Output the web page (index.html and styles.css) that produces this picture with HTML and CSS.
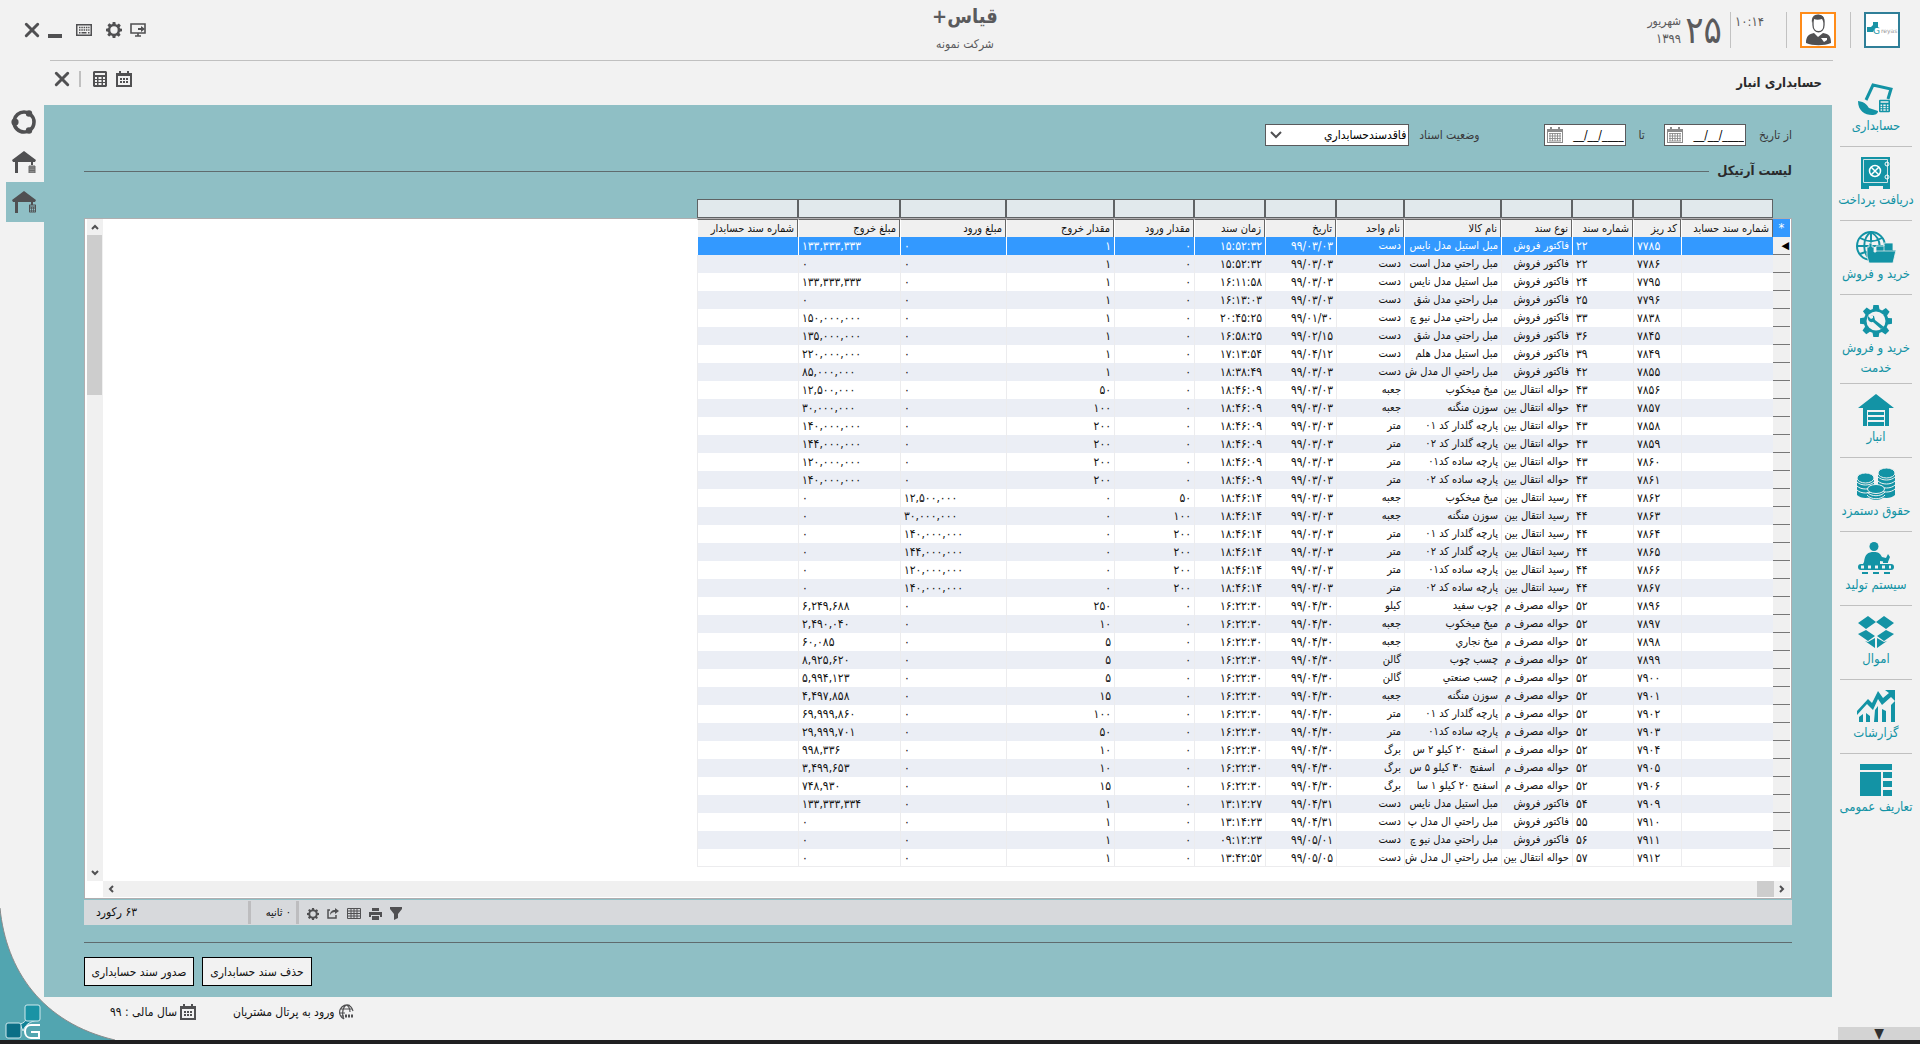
FILE: index.html
```html
<!DOCTYPE html>
<html lang="fa" dir="rtl">
<head>
<meta charset="utf-8">
<title>قیاس+ | حسابداری انبار</title>
<link rel="stylesheet" href="styles.css">
</head>
<body>
<svg class="defs" aria-hidden="true">
  <symbol id="i-close" viewBox="0 0 14 14"><path d="M2 2l10 10M12 2L2 12" fill="none" stroke="currentColor" stroke-width="2.6" stroke-linecap="round"/></symbol>
  <symbol id="i-gear" viewBox="0 0 24 24"><path fill="currentColor" fill-rule="evenodd" d="M10 0h4l.6 3.200 2 .9L19.400 2.300l2.800 2.800-1.900 2.700.8 1.900L24 10v4l-3.100.6-.9 2 1.900 2.700-2.800 2.800-2.700-1.900-1.900.8L14 24h-4l-.6-3.100-2-.9-2.700 1.900-2.800-2.800 1.900-2.700-.8-1.900L0 14v-4l3.200-.6.9-2L2.200 4.700 5 1.900l2.700 1.900 1.900-.8zM12 6.500a5.500 5.500 0 1 0 0 11 5.500 5.500 0 0 0 0-11z"/></symbol>
  <symbol id="i-cal" viewBox="0 0 16 16"><path fill="currentColor" fill-rule="evenodd" d="M0 2h3V0h2v2h6V0h2v2h3v14H0zM2 5v9h12V5z"/><path fill="currentColor" d="M4 7h2v2H4zM7 7h2v2H7zM10 7h2v2h-2zM4 10h2v2H4zM7 10h2v2H7zM10 10h2v2h-2z"/></symbol>
  <symbol id="i-cal-grid" viewBox="0 0 16 16"><path fill="currentColor" fill-rule="evenodd" d="M0 2h3V0h2v2h6V0h2v2h3v14H0zM1 5v10h14V5z"/><path d="M2 6.500h12M2 9h12M2 11.500h12M2 14h12M3 6v8M5.500 6v8M8 6v8M10.500 6v8M13 6v8" stroke="currentColor" stroke-width=".9"/></symbol>
  <symbol id="i-calc" viewBox="0 0 14 16"><path fill="currentColor" fill-rule="evenodd" d="M1 0h12l1 1v14l-1 1H1l-1-1V1zM2 2v2h10V2zM2 6v2h2V6zM5.500 6v2h3V6zM10 6v2h2V6zM2 9v2h2V9zM5.500 9v2h3V9zM10 9v2h2V9zM2 12v2h2v-2zM5.500 12v2h3v-2zM10 12v2h2v-2z"/></symbol>
  <symbol id="i-hut" viewBox="0 0 24 22"><path fill="currentColor" d="M12 0l12 9-1 2H1L0 9zM3 11h3v11H3zM19 11h2v3h-2z"/></symbol>
</svg>

<header class="topbar">
  <div class="window-tools">
    <button class="tool" aria-label="خروج"><svg width="16" height="16"><use href="#i-close"/></svg></button>
    <button class="tool" aria-label="کوچک کردن"><svg width="14" height="16"><path d="M0 12h14v4H0z" fill="currentColor"/></svg></button>
    <button class="tool keyboard" aria-label="صفحه کلید"><svg width="16" height="12" viewBox="0 0 16 12"><path fill="currentColor" fill-rule="evenodd" d="M0 0h16v12H0zM1.500 1.500v9h13v-9z"/><path d="M3 3.500h10.500M3 6h10.500" stroke="currentColor" stroke-width="1.500" stroke-dasharray="1.500 .8"/><path d="M3 8.700h1.500M5.500 8.700h5M12 8.700h1.500" stroke="currentColor" stroke-width="1.400"/></svg></button>
    <button class="tool" aria-label="تنظیمات"><svg width="16" height="16"><use href="#i-gear"/></svg></button>
    <button class="tool" aria-label="تغییر کاربر"><svg width="16" height="14" viewBox="0 0 16 14"><path d="M1 1h14v9H1zM8 10v3M5 13h6" fill="none" stroke="currentColor" stroke-width="1.600"/><path d="M8 5h3V3l4 3-4 3V7H8z" fill="currentColor"/></svg></button>
  </div>
  <div class="brand">
    <h1>قیاس+</h1>
    <p>شرکت نمونه</p>
  </div>
  <div class="account">
    <div class="logo-box"><svg width="32" height="32" viewBox="0 0 32 32"><path d="M7 8h5v6h-3l-2 4H1v-5h4l2-2z" fill="#1a93a5"/><text x="7" y="20" class="logo-g">G</text><text x="15" y="19" class="logo-name">reyas</text></svg></div>
    <i class="vline"></i>
    <button class="avatar" aria-label="کاربر"><svg width="28" height="32" viewBox="0 0 28 32"><path d="M9 8c0-9 11-9 11 0v3c0 9-11 9-11 0z" fill="#fff" stroke="#505052" stroke-width="1.300"/><path d="M8 9C7 2 11 0 15 1c5 0 6 4 5 8l-2-4c-3 1-6 1-8 0z" fill="#505052"/><path d="M2 29c0-7 3-9 8-10l4 4 5-4c6 1 8 3 8 10-7 3-18 3-25 0z" fill="#505052"/><path d="M17 24h6v2l-3 2z" fill="#fff"/></svg></button>
    <i class="vline"></i>
    <time class="clock">۱۰:۱۴</time>
    <i class="vline"></i>
    <span class="day">۲۵</span>
    <span class="month"><span>شهریور</span><span class="year">۱۳۹۹</span></span>
  </div>
</header>
<hr class="topline">

<div class="shell">
  <nav class="modules">
    <a href="#"><svg width="36" height="32" viewBox="0 0 36 32"><path d="M8 17L15 2l18 4-3 10" fill="none" stroke="currentColor" stroke-width="3"/><path d="M0 18c7 1 9 4 11 7l9 3c0 3-3 4-6 4C7 32 0 28 0 18z" fill="currentColor"/><svg x="21" y="16" width="11" height="14"><use href="#i-calc"/></svg></svg><span>حسابداری</span></a>
    <a href="#"><svg width="30" height="32" viewBox="0 0 30 32"><path d="M0 0h29v32h-7v-3H8v3H0z" fill="currentColor"/><path d="M2.500 2.500h24v23h-24z" fill="none" stroke="#cfe3e6"/><circle cx="14" cy="14" r="5.500" fill="none" stroke="#fff" stroke-width="1.500"/><path d="M10 10l8 8M18 10l-8 8" stroke="#fff" stroke-width="1.500"/><circle cx="26" cy="7" r="2" fill="none" stroke="#fff"/><circle cx="26" cy="20" r="2" fill="none" stroke="#fff"/></svg><span>دریافت پرداخت</span></a>
    <a href="#"><svg width="42" height="32" viewBox="0 0 42 32"><g fill="none" stroke="currentColor" stroke-width="2"><circle cx="16" cy="15" r="14"/><path d="M16 1v28M2 15h28M5 7c7 4 15 4 22 0M5 23c4-2 6-2 8-2M16 1c-9 6-9 22 0 28M16 1c8 5 10 12 8 20"/></g><path d="M12 25V16h2v-4h3v4h2v5h2v-6h8v-3h9v7h3l-3 13H14z" fill="currentColor" stroke="#f2f2f2" stroke-width=".8"/><path d="M20 20h20M29 14v6" stroke="#f2f2f2" stroke-width=".7"/></svg><span>خرید و فروش</span></a>
    <a href="#"><svg width="32" height="32" viewBox="0 0 32 32"><svg width="32" height="32"><use href="#i-gear"/></svg><circle cx="16" cy="16" r="9.500" fill="#f2f2f2"/><path d="M10 10l4 1 1 4 9 7-3 2-8-7c-4 1-6-3-5-6l3 3 2-1v-2z" fill="currentColor"/></svg><span>خرید و فروش خدمت</span></a>
    <a href="#"><svg width="36" height="32" viewBox="0 0 36 32"><path d="M18 0l18 14h-5v18h-4V16H9v16H5V14H0zM10 18h16v3H10zM10 23h16v3H10zM10 28h16v4H10z" fill="currentColor"/></svg><span>انبار</span></a>
    <a href="#"><svg width="38" height="32" viewBox="0 0 38 32"><g fill="currentColor"><path d="M0 10v17c4 4 13 4 17 0V10zM21 5v22c4 4 13 4 17 0V5zM11 21v8c4 4 12 4 16 0v-8z"/><g stroke="#f2f2f2"><ellipse cx="8.500" cy="10" rx="8.500" ry="5"/><ellipse cx="29.500" cy="5" rx="8.500" ry="5"/></g></g><g fill="none" stroke="#f2f2f2"><path d="M0 14c4 4 13 4 17 0M0 18c4 4 13 4 17 0M0 22c4 4 13 4 17 0M21 9c4 4 13 4 17 0M21 13c4 4 13 4 17 0M21 17c4 4 13 4 17 0M21 21c4 4 13 4 17 0"/><ellipse cx="19" cy="21" rx="8.500" ry="4.500" fill="#1393a5"/><path d="M10 24c4 5 14 5 18 0M10 27c4 5 14 5 18 0"/></g></svg><span>حقوق دستمزد</span></a>
    <a href="#"><svg width="36" height="32" viewBox="0 0 36 32"><circle cx="16" cy="4.500" r="4.500" fill="currentColor"/><path d="M6 20c1-8 4-10 10-10 4 0 6 1 8 5l4 1 2-4 2 3-2 5-8-1v3H5zM25 17h5v4h-5z" fill="currentColor"/><rect y="22" width="36" height="6" rx="3" fill="currentColor"/><path d="M3 25h30" stroke="#f2f2f2" stroke-width="3" stroke-dasharray="3 4"/><path d="M4 31h28" stroke="currentColor" stroke-width="2" stroke-dasharray="6 5"/></svg><span>سیستم تولید</span></a>
    <a href="#"><svg width="36" height="32" viewBox="0 0 36 32"><path d="M10 0l8 6-10 7-8-6zM26 0l10 7-8 6-10-7zM8 14l9 6-7 5-10-7zM28 14l8 4-10 7-7-5zM7 25l3 1 7-4v10zM29 25l-3 1-7-4v10z" fill="currentColor"/></svg><span>اموال</span></a>
    <a href="#"><svg width="38" height="32" viewBox="0 0 38 32"><path d="M0 21L11 9l4 4 6-12 5 7 6-5-4-3h10v11l-4-4-9 8-4-6-5 11-6-6L0 25zM2 27l4-3v8H2zM9 23l4 3v6H9zM18 20l3-4v16h-4zM25 19l4 2v11h-4zM34 15l4-4v21h-4z" fill="currentColor"/></svg><span>گزارشات</span></a>
    <a href="#"><svg width="32" height="32" viewBox="0 0 32 32"><path d="M0 0h32v6H0zM0 8h21v24H0zM23 8h9v6h-9zM23 17h9v6h-9zM23 26h9v6h-9z" fill="currentColor"/></svg><span>تعاریف عمومی</span></a>
    <button class="more" aria-label="بیشتر">▼</button>
  </nav>

  <div class="content">
    <div class="titlebar">
      <h2>حسابداری انبار</h2>
      <div class="title-tools">
        <button class="tool" aria-label="بستن"><svg width="16" height="16"><use href="#i-close"/></svg></button>
        <i class="sep"></i>
        <button class="tool" aria-label="ماشین حساب"><svg width="14" height="16"><use href="#i-calc"/></svg></button>
        <button class="tool" aria-label="تقویم"><svg width="16" height="16"><use href="#i-cal"/></svg></button>
      </div>
    </div>

    <main class="panel">
      <form class="filters">
        <label for="from">از تاریخ</label>
        <span class="date-box"><input id="from" value="__/__/____" dir="ltr"><svg class="cal" width="16" height="16"><use href="#i-cal-grid"/></svg></span>
        <label for="to">تا</label>
        <span class="date-box"><input id="to" value="__/__/____" dir="ltr"><svg class="cal" width="16" height="16"><use href="#i-cal-grid"/></svg></span>
        <label for="state" class="state-label">وضعیت اسناد</label>
        <span class="select-box"><select id="state"><option>فاقدسندحسابداري</option></select><svg width="12" height="8" viewBox="0 0 12 8"><path d="M1 1l5 5 5-5" fill="none" stroke="#505052" stroke-width="2"/></svg></span>
      </form>

      <div class="legend"><h3>لیست آرتیکل</h3><hr></div>

      <div class="column-filters" id="columnFilters"></div>
      <section class="grid">
        <div class="grid-body">
          <table>
            <colgroup id="cols"></colgroup>
            <thead><tr id="headRow"></tr></thead>
            <tbody id="rows"></tbody>
          </table>
          <div class="vscroll">
            <svg width="16" height="16" viewBox="0 0 16 16"><path d="M5 10l3-3 3 3" /></svg>
            <i class="vthumb"></i>
            <svg class="down" width="16" height="16" viewBox="0 0 16 16"><path d="M5 6l3 3 3-3"/></svg>
          </div>
        </div>
        <div class="hscroll">
          <svg width="16" height="16" viewBox="0 0 16 16"><path d="M6 5l3 3-3 3"/></svg>
          <i class="hthumb"></i>
          <svg class="end" width="16" height="16" viewBox="0 0 16 16"><path d="M10 5L7 8l3 3"/></svg>
        </div>
      </section>

      <div class="status">
        <div class="status-tools">
          <button class="tool" aria-label="فیلتر"><svg width="12" height="13" viewBox="0 0 12 13"><path d="M0 0h12v2L8 7v4l-4 2V7L0 2z" fill="currentColor"/></svg></button>
          <button class="tool" aria-label="چاپ"><svg width="13" height="12" viewBox="0 0 13 12"><path d="M3 0h7v3H3zM0 4h13v5h-2V7H2v2H0zM3 8h7v4H3z" fill="currentColor"/></svg></button>
          <button class="tool" aria-label="ستون ها"><svg width="14" height="11" viewBox="0 0 14 11"><path d="M.5.5h13v10H.5zM0 3h14M0 5.500h14M0 8h14M4 0v11M7 0v11M10 0v11" fill="none" stroke="currentColor"/></svg></button>
          <button class="tool" aria-label="ارسال"><svg width="12" height="11" viewBox="0 0 12 11"><path d="M3 2H1v8h8V7" fill="none" stroke="currentColor" stroke-width="1.500"/><path d="M3 7c0-3 2-5 5-5V0l4 3-4 3V4C6 4 4 5 3 7z" fill="currentColor"/></svg></button>
          <button class="tool" aria-label="تنظیمات جدول"><svg width="12" height="12"><use href="#i-gear"/></svg></button>
        </div>
        <span class="elapsed">۰ ثانیه</span>
        <span class="count">۶۳ رکورد</span>
      </div>

      <hr class="panel-line">
      <div class="actions">
        <button>حذف سند حسابداری</button>
        <button>صدور سند حسابداری</button>
      </div>
    </main>

    <footer class="footer">
      <a href="#"><svg width="16" height="16" viewBox="0 0 16 16"><path d="M12 1.500A7 7 0 1 0 6 15M15 7c-1-4-3-6-7-6C4 4 4 12 6 15M8 1c3 1 4 4 4 7M2 5h12M1 9h6M3 12h3" fill="none" stroke="currentColor" stroke-width="1.200"/><path d="M7 12h9" stroke="currentColor" stroke-width="3" stroke-dasharray="2 1"/></svg>ورود به پرتال مشتریان</a>
      <span><svg width="16" height="16"><use href="#i-cal"/></svg>سال مالی : ۹۹</span>
    </footer>
  </div>

  <nav class="rail">
    <a href="#" aria-label="چرخه"><svg width="26" height="26" viewBox="0 0 26 26"><circle cx="13" cy="13" r="10" fill="none" stroke="currentColor" stroke-width="3.600" stroke-dasharray="19 2" stroke-dashoffset="9"/><circle cx="4" cy="13" r="3.600" fill="currentColor"/><circle cx="18" cy="4.500" r="3.200" fill="currentColor"/><circle cx="18" cy="21.500" r="3.200" fill="currentColor"/></svg></a>
    <a href="#" aria-label="انبار"><svg width="24" height="22"><use href="#i-hut"/><path d="M17 15h6v7h-6zM17 17h6M17 19.500h6" fill="#8b8b8b" stroke="#6b6b6b"/></svg></a>
    <a href="#" class="active" aria-label="حسابداری انبار"><svg width="24" height="22"><use href="#i-hut"/><svg x="17" y="13" width="7" height="9"><use href="#i-calc"/></svg></svg></a>
  </nav>
</div>
<svg class="corner" width="115" height="132" viewBox="0 0 115 132"><path d="M0 0C6 62 42 115 115 132H0z" fill="#52a5b0"/><path d="M0 0C6 62 42 115 115 132" fill="none" stroke="#8b8b8b"/><path d="M20 116c4-1 6-3 7-7l11 3c-4 1-12 2-15 11z" fill="#0f8196" stroke="#cfe9ed"/><g stroke="#cfe9ed"><rect x="25" y="97" width="15" height="16" rx="2" fill="#1a93a5"/><rect x="6" y="115" width="15" height="15" rx="2" fill="#0b6f86"/></g><path d="M40 117h-9c-8 0-8 13 0 13h8v-6h-8" fill="none" stroke="#fff" stroke-width="2"/></svg>
<div class="taskbar"></div>
<script src="app.js"></script>
</body>
</html>
```
FILE: styles.css
```css
* { box-sizing: border-box; }
body {
  margin: 0;
  min-height: 100vh;
  display: flex;
  flex-direction: column;
  position: relative;
  background: #f2f2f2;
  color: #3a3a3c;
  font: 12px/16px "DejaVu Sans Condensed", "DejaVu Sans", sans-serif;
}
button, input, select { font: inherit; color: inherit; }
h1, h2, h3, p, hr { margin: 0; }
a { color: inherit; text-decoration: none; }
.defs { position: absolute; width: 0; height: 0; }
svg { display: block; flex: none; }
.tool {
  display: flex;
  padding: 0;
  border: 0;
  background: none;
  color: #505052;
}

/* Top bar */
.topbar {
  height: 60px;
  display: grid;
  grid-template-columns: 1fr auto 1fr;
  align-items: start;
  padding: 0 20px 0 24px;
}
.window-tools {
  grid-column: 3;
  grid-row: 1;
  direction: ltr;
  display: flex;
  align-items: center;
  gap: 8px;
  padding-top: 22px;
}
.keyboard { margin: 0 6px 0 6px; }
.brand {
  grid-column: 2;
  padding: 3px 0 0 6px;
  text-align: center;
  color: #5a5a5c;
}
.brand h1 { font-size: 20px; line-height: 26px; }
.brand p { line-height: 30px; }
.account {
  grid-column: 1;
  grid-row: 1;
  display: flex;
  padding-top: 12px;
  color: #5a5a5c;
}
.logo-box, .avatar {
  width: 36px;
  height: 36px;
  padding: 0;
  display: flex;
  align-items: center;
  justify-content: center;
  background: #fff;
  border: 2px solid #2f7f98;
}
.avatar { border-color: #ff8c1a; }
.logo-g { font: 9px "DejaVu Sans", sans-serif; fill: #1a93a5; direction: ltr; }
.logo-name { font: 6px "DejaVu Sans", sans-serif; fill: #9a9a9a; direction: ltr; }
.vline { width: 1px; height: 36px; margin: 0 13px 0 14px; background: #c2c2c2; }
.clock { margin-right: 8px; font-size: 13px; line-height: 20px; }
.clock + .vline { margin: 0 4px; }
.day { font-size: 38px; line-height: 36px; margin: 0 4px; }
.month { display: flex; flex-direction: column; line-height: 18px; }
.year { font-size: 13px; }
.topline { border: 0; height: 1px; background: #c0c0c0; margin: 0 87px 0 50px; }

/* Page frame */
.shell { flex: 1; display: flex; }
.modules {
  width: 88px;
  display: flex;
  flex-direction: column;
  padding: 12px 8px 0 0;
}
.modules a {
  width: 72px;
  min-height: 74px;
  display: flex;
  flex-direction: column;
  align-items: center;
  gap: 1px;
  padding: 10px 0 5px;
  border-bottom: 1px solid #c0c0c0;
  color: #1393a5;
  font-size: 13px;
  line-height: 20px;
  text-align: center;
}
.modules span { margin: 0 -6px; }
.modules a:last-of-type { border: 0; }
.more {
  margin: auto -8px 0 6px;
  height: 13px;
  padding: 0;
  border: 0;
  background: #d3d3d3;
  color: #303030;
  font-size: 14px;
  line-height: 13px;
}
.content { flex: 1; min-width: 0; display: flex; flex-direction: column; }
.titlebar {
  height: 44px;
  display: flex;
  justify-content: space-between;
  align-items: center;
  padding: 0 10px 0 10px;
}
.titlebar h2, .legend h3 { font-size: 13px; font-weight: bold; color: #2a2a2c; }
.titlebar h2 { line-height: 20px; }
.title-tools { direction: ltr; display: flex; gap: 9px; align-items: center; padding-bottom: 8px; }
.sep { width: 2px; height: 16px; background: #c0c0c0; margin-right: 3px; }

/* Left rail */
.rail { width: 44px; display: flex; flex-direction: column; padding: 41px 0 0 0; color: #505052; }
.rail a { height: 40px; display: flex; align-items: center; justify-content: center; margin-left: 6px; padding-right: 2px; }
.rail .active { background: #8fbfc5; }

/* Panel */
.panel { flex: 1; padding: 19px 40px 0 40px; background: #8fbfc5; }
.filters { display: flex; align-items: center; height: 22px; }
.date-box, .select-box {
  display: flex;
  align-items: center;
  height: 22px;
  border: 1px solid #5a5a5c;
  background: #fff;
}
.date-box { width: 82px; margin: 0 13px 0 19px; padding-left: 2px; }
.date-box input {
  flex: 1;
  min-width: 0;
  padding: 0 1px;
  border: 0;
  background: none;
  color: #000;
  font-size: 12px;
  text-align: right;
}
.cal { color: #8b8b8b; }
.state-label { margin-right: 45px; }
.select-box { width: 144px; margin-right: 10px; padding-left: 4px; }
.select-box select {
  flex: 1;
  min-width: 0;
  appearance: none;
  border: 0;
  padding: 0 2px;
  background: none;
  color: #000;
}
.legend { display: flex; gap: 8px; align-items: center; margin-top: 12px; }
.legend h3 { line-height: 26px; }
.legend hr, .panel-line { border: 0; height: 1px; background: #5f6b6e; }
.legend hr { flex: 1; }

/* Grid */
.column-filters { display: flex; width: 1076px; height: 19px; margin: 15px 19px 0 0; }
.column-filters input {
  min-width: 0;
  height: 19px;
  padding: 0 2px;
  border: 1px solid #5f6365;
  border-radius: 0;
  background: #e1e9ec;
}
.grid { background: #fff; border: 1px solid #b0aeb0; padding: 0 1px 1px 2px; }
.grid-body { display: flex; justify-content: space-between; }
table { width: 1093px; height: 648px; margin-bottom: 14px; table-layout: fixed; border-collapse: separate; border-spacing: 0; font-size: 11px; line-height: 16px; }
th, td {
  height: 18px;
  padding: 0 3px;
  overflow: hidden;
  white-space: pre;
  font-weight: normal;
  color: #111;
}
th {
  text-align: right;
  background: #f0f0f0;
  border-top: 1px solid #666;
  border-right: 1px solid #666;
  border-left: 1px solid #fff;
}
td { border-left: 1px solid #ececee; }
.num, .digits { font-size: 12px; }
.num { text-align: left; direction: ltr; }
tbody tr:nth-child(even) { background: #ebeef5; }
tbody tr.selected td { background: #3399ff; color: #fff; border-color: #fff; }
th.mark { background: #3399ff; border: 0; color: #fff; text-align: center; font-size: 13px; }
tbody tr td.mark, tbody tr.selected td.mark {
  background: #f0f0f0;
  border: 0;
  border-bottom: 1px solid #777;
  color: #000;
  padding: 0 1px;
}
tbody tr:last-child td { border-bottom: 1px solid #ececee; }
.vscroll, .hscroll { background: #f0f0f0; display: flex; }
.vscroll { width: 16px; flex-direction: column; }
.vscroll path, .hscroll path { fill: none; stroke: #505052; stroke-width: 2; }
.vthumb { height: 160px; background: #cdcdcd; margin-right: 1px; }
.down { margin-top: auto; }
.hscroll { height: 16px; margin-left: 16px; }
.hthumb { width: 17px; background: #cdcdcd; }
.end { margin-right: auto; }

/* Status bar */
.status { display: flex; justify-content: flex-end; align-items: center; height: 25px; margin-top: 1px; background: #d7d9dc; color: #111; font-size: 11px; }
.status-tools { display: flex; align-items: center; gap: 8px; padding: 2px 0 0 8px; }
.elapsed, .count { border-right: 3px solid #bdbdbf; line-height: 23px; }
.elapsed { width: 48px; padding-right: 5px; }
.count { width: 167px; padding: 0 0 0 12px; text-align: left; font-size: 12px; }
.panel-line { margin-top: 17px; }
.actions { display: flex; justify-content: flex-end; gap: 8px; margin-top: 14px; }
.actions button { width: 110px; height: 29px; padding: 0; border: 1px solid #000; background: #f2f2f2; color: #111; font-size: 12px; }

/* Footer */
.footer { height: 43px; display: flex; justify-content: flex-end; gap: 37px; padding: 7px 0 0 66px; color: #111; }
.footer a, .footer span { display: flex; gap: 3px; height: 16px; }
.footer svg { color: #505052; }
.corner { position: absolute; left: 0; bottom: 4px; }
.taskbar { height: 4px; background: #1f1f21; }
```
FILE: app.js
```js
const columns = [
  ['شماره سند حسابد', 92], ['کد ریز', 48, 'num'], ['شماره سند', 61, 'num'],
  ['نوع سند', 71], ['نام کالا', 97], ['نام واحد', 68], ['تاریخ', 71, 'digits'], ['زمان سند', 71, 'digits'],
  ['مقدار ورود', 80, 'digits'], ['مقدار خروج', 108, 'digits'], ['مبلغ ورود', 106, 'num'],
  ['مبلغ خروج', 102, 'num'], ['شماره سند حسابدار', 101]
];
const F = 'فاکتور فروش', H = 'حواله انتقال بین', R = 'رسید انتقال بین', M = 'حواله مصرف م';
const mikh = 'میخ میخکوب', suzan = 'سوزن منگنه', gol1 = 'پارچه گلدار کد 01', gol2 = 'پارچه گلدار کد 02',
  sade1 = 'پارچه ساده کد01', sade2 = 'پارچه ساده کد 02';
// code, document, type, item, unit, date, time, qty in, qty out, amount in, amount out
const data = [
  [7785, 22, F, 'مبل استیل مدل نایس', 'دست', '99/03/03', '15:52:32', 0, 1, 0, 133333333],
  [7786, 22, F, 'مبل راحتي مدل است', 'دست', '99/03/03', '15:52:32', 0, 1, 0, 0],
  [7795, 24, F, 'مبل استیل مدل نایس', 'دست', '99/03/03', '16:11:58', 0, 1, 0, 133333333],
  [7796, 25, F, 'مبل راحتي مدل شق', 'دست', '99/03/03', '16:13:03', 0, 1, 0, 0],
  [7838, 33, F, 'مبل راحتي مدل نیو چ', 'دست', '99/01/30', '20:45:25', 0, 1, 0, 150000000],
  [7845, 36, F, 'مبل راحتي مدل شق', 'دست', '99/02/15', '16:58:25', 0, 1, 0, 135000000],
  [7849, 39, F, 'مبل استیل مدل هلم', 'دست', '99/04/12', '17:13:54', 0, 1, 0, 220000000],
  [7855, 42, F, 'مبل راحتي ال مدل ش', 'دست', '99/03/03', '18:38:49', 0, 1, 0, 85000000],
  [7856, 43, H, mikh, 'جعبه', '99/03/03', '18:46:09', 0, 50, 0, 12500000],
  [7857, 43, H, suzan, 'جعبه', '99/03/03', '18:46:09', 0, 100, 0, 30000000],
  [7858, 43, H, gol1, 'متر', '99/03/03', '18:46:09', 0, 200, 0, 140000000],
  [7859, 43, H, gol2, 'متر', '99/03/03', '18:46:09', 0, 200, 0, 144000000],
  [7860, 43, H, sade1, 'متر', '99/03/03', '18:46:09', 0, 200, 0, 120000000],
  [7861, 43, H, sade2, 'متر', '99/03/03', '18:46:09', 0, 200, 0, 140000000],
  [7862, 44, R, mikh, 'جعبه', '99/03/03', '18:46:14', 50, 0, 12500000, 0],
  [7863, 44, R, suzan, 'جعبه', '99/03/03', '18:46:14', 100, 0, 30000000, 0],
  [7864, 44, R, gol1, 'متر', '99/03/03', '18:46:14', 200, 0, 140000000, 0],
  [7865, 44, R, gol2, 'متر', '99/03/03', '18:46:14', 200, 0, 144000000, 0],
  [7866, 44, R, sade1, 'متر', '99/03/03', '18:46:14', 200, 0, 120000000, 0],
  [7867, 44, R, sade2, 'متر', '99/03/03', '18:46:14', 200, 0, 140000000, 0],
  [7896, 52, M, 'چوب سفید', 'کیلو', '99/04/30', '16:22:30', 0, 250, 0, 6249688],
  [7897, 52, M, mikh, 'جعبه', '99/04/30', '16:22:30', 0, 10, 0, 2490040],
  [7898, 52, M, 'میخ نجاري', 'جعبه', '99/04/30', '16:22:30', 0, 5, 0, 60085],
  [7899, 52, M, 'چسب چوب', 'گالن', '99/04/30', '16:22:30', 0, 5, 0, 8925620],
  [7900, 52, M, 'چسب صنعتي', 'گالن', '99/04/30', '16:22:30', 0, 5, 0, 5994123],
  [7901, 52, M, suzan, 'جعبه', '99/04/30', '16:22:30', 0, 15, 0, 4497858],
  [7902, 52, M, gol1, 'متر', '99/04/30', '16:22:30', 0, 100, 0, 69999860],
  [7903, 52, M, sade1, 'متر', '99/04/30', '16:22:30', 0, 50, 0, 29999701],
  [7904, 52, M, 'اسفنج  20 کیلو 2 س', 'برگ', '99/04/30', '16:22:30', 0, 10, 0, 998336],
  [7905, 52, M, ' اسفنج  30 کیلو 5 س', 'برگ', '99/04/30', '16:22:30', 0, 10, 0, 3499653],
  [7906, 52, M, 'اسفنج 20 کیلو 1 سا', 'برگ', '99/04/30', '16:22:30', 0, 15, 0, 748930],
  [7909, 54, F, 'مبل استیل مدل نایس', 'دست', '99/04/31', '13:12:27', 0, 1, 0, 133333334],
  [7910, 55, F, 'مبل راحتي ال مدل پ', 'دست', '99/04/31', '13:14:23', 0, 1, 0, 0],
  [7911, 56, F, 'مبل راحتي مدل نیو چ', 'دست', '99/05/01', '09:12:23', 0, 1, 0, 0],
  [7912, 57, H, 'مبل راحتي ال مدل ش', 'دست', '99/05/05', '13:42:52', 0, 1, 0, 0]
];

const fa = text => String(text).replace(/\d/g, d => '۰۱۲۳۴۵۶۷۸۹'[d]);
const money = n => n.toLocaleString('en-US');

document.getElementById('columnFilters').innerHTML = columns
  .map(([name, width]) => `<input aria-label="${name}" style="width:${width}px">`).join('');
document.getElementById('cols').innerHTML = '<col style="width:17px">' + columns
  .map(([, width]) => `<col style="width:${width}px">`).join('');
document.getElementById('headRow').innerHTML = '<th class="mark">*</th>' + columns
  .map(([name]) => `<th>${name}</th>`).join('');
document.getElementById('rows').innerHTML = data.map((row, i) => {
  const cells = ['', ...row.slice(0, 9), money(row[9]), money(row[10]), ''];
  return `<tr${i === 0 ? ' class="selected"' : ''}><td class="mark">${i === 0 ? '◀' : ''}</td>` +
    cells.map((c, n) => `<td class="${columns[n][2] || ''}">${fa(c)}</td>`).join('') + '</tr>';
}).join('');
```
